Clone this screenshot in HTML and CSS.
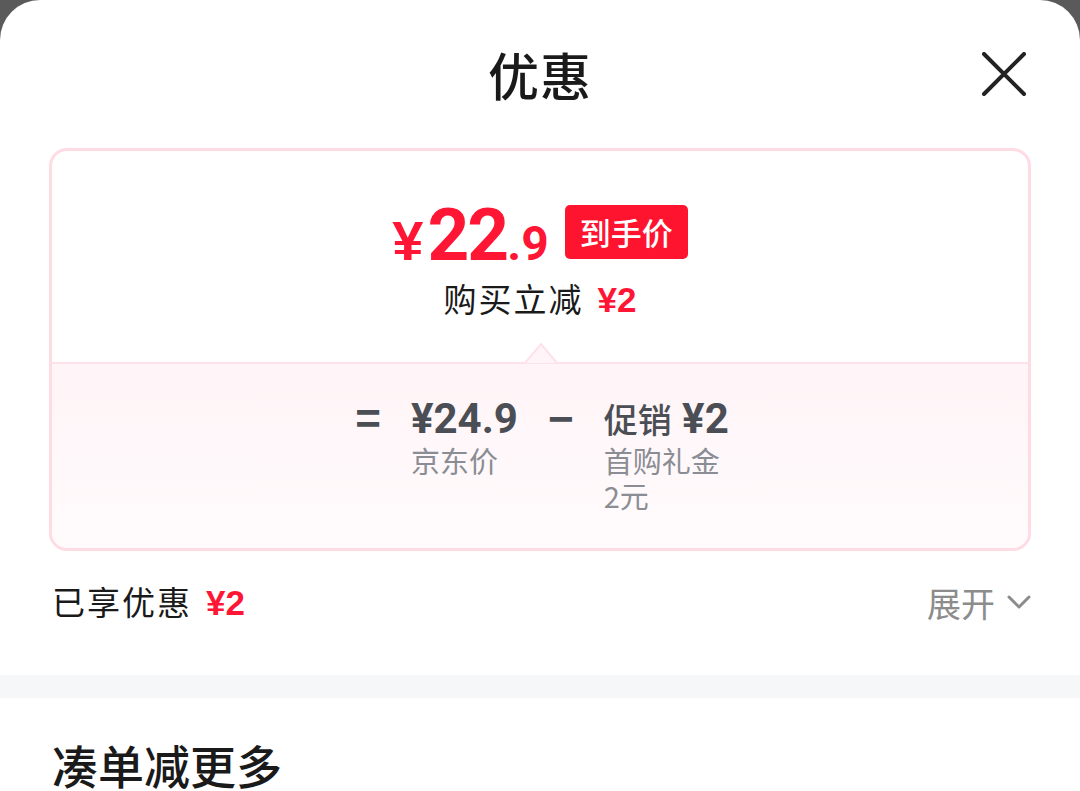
FILE: index.html
```html
<!DOCTYPE html>
<html lang="zh-CN">
<head>
  <meta charset="UTF-8">
  <meta name="viewport" content="width=device-width, initial-scale=1.0">
  <title>优惠</title>
  <link rel="stylesheet" href="styles.css">
</head>
<body>
  <div class="sheet">
    <div class="header">
      <span></span>
      <h1 class="title">优惠</h1>
      <button class="close" aria-label="关闭">
        <svg width="44" height="44" viewBox="0 0 44 44">
          <path d="M2 2 L42 42 M42 2 L2 42" stroke="#222" stroke-width="4" stroke-linecap="round" fill="none"/>
        </svg>
      </button>
    </div>

    <div class="price-card">
      <div class="card-top">
        <div class="final-price">
          <span class="price">
            <span class="yen">¥</span><span class="int">22</span><span class="dec">.9</span>
          </span>
          <span class="badge">到手价</span>
        </div>
        <div class="saving">购买立减<span class="red">¥2</span></div>
      </div>

      <div class="card-bottom">
        <svg class="notch" width="34" height="22" viewBox="0 0 34 22">
          <path d="M0 21 L17 1 L34 21 Z" fill="#fff5f8"/>
          <path d="M1 21 L17 2 L33 21" stroke="#ffe1e9" stroke-width="2" fill="none"/>
        </svg>
        <div class="formula">
          <span class="op">=</span>
          <div class="term">
            <div class="amount">¥24.9</div>
            <div class="label">京东价</div>
          </div>
          <span class="op">−</span>
          <div class="term">
            <div class="amount"><span class="cn">促销</span> ¥2</div>
            <div class="label">首购礼金</div>
            <div class="label sub">2元</div>
          </div>
        </div>
      </div>
    </div>

    <div class="enjoyed">
      <div class="enjoyed-text">已享优惠<span class="red">¥2</span></div>
      <div class="expand">
        展开
        <svg width="24" height="16" viewBox="0 0 24 16">
          <path d="M2 3 L12 13 L22 3" stroke="#8c8c8c" stroke-width="3" fill="none" stroke-linecap="round" stroke-linejoin="round"/>
        </svg>
      </div>
    </div>

    <div class="gap-band"></div>

    <h2 class="section-title">凑单减更多</h2>
  </div>
</body>
</html>
```

FILE: styles.css
```css
* {
  box-sizing: border-box;
}

body {
  margin: 0;
  background: #5a5a5a;
  font-family: "Noto Sans CJK SC", "Noto Sans", sans-serif;
  height: 791px;
  overflow: hidden;
}

.sheet {
  background: #fff;
  border-radius: 40px 40px 0 0;
  height: 791px;
}

.header {
  height: 148px;
  display: grid;
  grid-template-columns: 1fr auto 1fr;
  align-items: center;
  padding: 0 49px;
}

.title {
  margin: 0;
  font-size: 51px;
  font-weight: 500;
  color: #1a1a1a;
  line-height: 60px;
  letter-spacing: 1px;
}

.close {
  justify-self: end;
  background: none;
  border: none;
  padding: 0;
  margin-right: 5px;
  display: flex;
}

.price-card {
  margin: 0 49px;
  border: 3px solid #ffdbe4;
  border-radius: 18px;
  overflow: hidden;
}

.card-top {
  padding: 54px 0 42px;
  display: flex;
  flex-direction: column;
  align-items: center;
}

.final-price {
  display: flex;
  align-items: center;
  height: 54px;
}

.price {
  color: #ff1635;
  font-family: Roboto, "Liberation Sans", sans-serif;
  font-weight: 700;
  display: flex;
  align-items: baseline;
  line-height: 1;
  margin-top: 6px;
}

.yen {
  font-family: "Liberation Sans", sans-serif;
  font-size: 56px;
  margin-right: 4px;
}

.int {
  font-size: 73px;
  letter-spacing: -2px;
}

.dec {
  font-size: 48px;
}

.badge {
  margin-left: 16px;
  background: #ff1430;
  color: #fff;
  font-size: 31px;
  line-height: 54px;
  padding: 0 15px;
  border-radius: 5px;
  font-weight: 500;
}

.saving {
  margin-top: 19px;
  font-size: 33px;
  line-height: 40px;
  letter-spacing: 2px;
  color: #1a1a1a;
  display: flex;
  align-items: baseline;
}

.red {
  color: #ff1635;
  font-family: "Liberation Sans", sans-serif;
  font-weight: 700;
  font-size: 35px;
  letter-spacing: 0;
  margin-left: 14px;
}

.card-bottom {
  position: relative;
  border-top: 2px solid #ffe1e9;
  background: linear-gradient(to bottom, #fff4f7, #fffbfc);
  padding: 35px 0 35px;
}

.notch {
  position: absolute;
  left: 472px;
  top: -22px;
}

.formula {
  display: flex;
  justify-content: center;
  align-items: flex-start;
  gap: 30px;
  margin-left: 4px;
}

.op {
  font-family: "Liberation Sans", sans-serif;
  font-weight: 700;
  font-size: 44px;
  line-height: 40px;
  color: #4b4e55;
}

.amount {
  font-family: Roboto, "Liberation Sans", sans-serif;
  font-weight: 700;
  font-size: 42px;
  line-height: 40px;
  color: #4b4e55;
  white-space: nowrap;
}

.cn {
  font-family: "Noto Sans CJK SC", sans-serif;
  font-weight: 500;
  font-size: 34px;
}

.label {
  margin-top: 4px;
  font-size: 29px;
  line-height: 35px;
  color: #8a8d94;
}

.label.sub {
  margin-top: 0;
}

.enjoyed {
  display: flex;
  justify-content: space-between;
  align-items: center;
  margin: 31px 49px 0 52px;
  height: 40px;
}

.enjoyed-text {
  font-size: 33px;
  line-height: 40px;
  letter-spacing: 2px;
  color: #1a1a1a;
  display: flex;
  align-items: baseline;
}

.expand {
  display: flex;
  align-items: center;
  gap: 12px;
  font-size: 34px;
  color: #8c8c8c;
}

.gap-band {
  margin-top: 53px;
  height: 23px;
  background: #f6f7f9;
}

.section-title {
  margin: 38px 0 0 52px;
  font-size: 46px;
  font-weight: 500;
  line-height: 56px;
  color: #1a1a1a;
}
```
